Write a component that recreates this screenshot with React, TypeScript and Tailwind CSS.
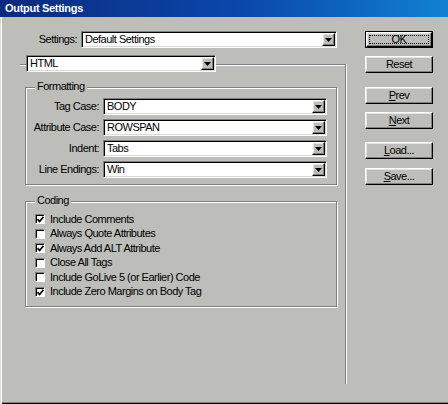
import React from "react";

const raised =
  "border border-t-white border-l-white border-b-black border-r-black shadow-[inset_-1px_-1px_0_#808080,inset_1px_1px_0_#e4e4e0]";

function Arrow() {
  return (
    <div className={`flex h-[13px] w-[13px] shrink-0 items-center justify-center bg-[#bdbeb9] ${raised}`}>
      <svg width="7" height="4" viewBox="0 0 7 4">
        <polygon points="0,0 7,0 3.5,4" fill="#000" />
      </svg>
    </div>
  );
}

function Select({ value, w }: { value: string; w: string }) {
  return (
    <div
      className={`flex h-[17px] shrink-0 items-center bg-white border border-t-[#808080] border-l-[#808080] border-b-white border-r-white shadow-[inset_1px_1px_0_#000,inset_-1px_-1px_0_#d8d8d4] ${w}`}
    >
      <span className="flex-1 truncate pl-[3px] leading-none">{value}</span>
      <div className="mr-[1px]">
        <Arrow />
      </div>
    </div>
  );
}

function Btn({ children, isDefault }: { children: React.ReactNode; isDefault?: boolean }) {
  if (isDefault) {
    return (
      <div className="h-[17px] w-[68px] border border-black">
        <div className={`flex h-full w-full items-center justify-center bg-[#bdbeb9] ${raised}`}>
          <div className="flex h-[9px] w-[60px] items-center justify-center border border-dotted border-black text-[11px] leading-none">
            {children}
          </div>
        </div>
      </div>
    );
  }
  return (
    <div className={`flex h-[17px] w-[68px] items-center justify-center bg-[#bdbeb9] text-[11px] leading-none ${raised}`}>
      {children}
    </div>
  );
}

function Check({ checked, label }: { checked: boolean; label: string }) {
  return (
    <div className="flex h-[14.5px] items-center">
      <div className="flex h-[10px] w-[10px] shrink-0 items-center justify-center bg-white border border-t-[#808080] border-l-[#808080] border-b-white border-r-white shadow-[inset_1px_1px_0_#000]">
        {checked && (
          <svg width="7" height="7" viewBox="0 0 7 7" className="ml-[1px] mt-[1px]">
            <path d="M0.5 3.2 L2.6 5.5 L6.5 0.8" stroke="#000" strokeWidth="1.8" fill="none" />
          </svg>
        )}
      </div>
      <span className="ml-[5px] leading-none">{label}</span>
    </div>
  );
}

const etched = "border border-[#808080] shadow-[inset_1px_1px_0_#fff,1px_1px_0_#fff]";

function FormRow({ label, value }: { label: string; value: string }) {
  return (
    <div className="flex h-[17px] items-center">
      <span className="w-[74px] pr-[1px] text-right leading-none">{label}</span>
      <div className="ml-[3px]">
        <Select value={value} w="w-[224px]" />
      </div>
    </div>
  );
}

export default function App() {
  return (
    <div className="flex h-[404px] w-[448px] flex-col overflow-hidden bg-[#bdbeb9] font-['Liberation_Sans',Arial,sans-serif] text-[11px] tracking-[-0.5px] text-black shadow-[inset_1px_0_0_#dcdcd8,inset_2px_0_0_#fff,inset_0_-1px_0_#000,inset_0_-2px_0_#808080]">
      {/* Title bar */}
      <div className="flex h-[17px] shrink-0 items-center bg-[linear-gradient(to_right,#0b2a7c,#0a48ac_55%,#1181d2)] pl-[5px]">
        <span className="text-[11px] font-bold leading-none tracking-[-0.3px] text-white">Output Settings</span>
      </div>

      <div className="flex flex-1">
        {/* Left column */}
        <div className="flex w-[346px] flex-col">
          {/* Settings row */}
          <div className="mt-[14px] flex h-[17px] items-center">
            <span className="w-[77px] text-right leading-none">Settings:</span>
            <div className="ml-[4px]">
              <Select value="Default Settings" w="w-[256px]" />
            </div>
          </div>

          {/* Tab group */}
          <div className="ml-[20px] mt-[16px] flex h-[320px] w-[326px] flex-col border-t border-r border-[#808080] shadow-[inset_0_1px_0_#fff,1px_0_0_#fff]">
            <div className="-mt-[10px] ml-[6px]">
              <Select value="HTML" w="w-[190px]" />
            </div>

            {/* Formatting */}
            <div className={`relative ml-[5px] mt-[15px] flex h-[98px] w-[312px] flex-col gap-[4px] pt-[10px] ${etched}`}>
              <span className="absolute left-[9px] top-[-7px] bg-[#bdbeb9] px-[2px] leading-none">Formatting</span>
              <FormRow label="Tag Case:" value="BODY" />
              <FormRow label="Attribute Case:" value="ROWSPAN" />
              <FormRow label="Indent:" value="Tabs" />
              <FormRow label="Line Endings:" value="Win" />
            </div>

            {/* Coding */}
            <div className={`relative ml-[5px] mt-[16px] flex h-[106px] w-[312px] flex-col pl-[9px] pt-[10px] ${etched}`}>
              <span className="absolute left-[9px] top-[-7px] bg-[#bdbeb9] px-[2px] leading-none">Coding</span>
              <Check checked label="Include Comments" />
              <Check checked={false} label="Always Quote Attributes" />
              <Check checked label="Always Add ALT Attribute" />
              <Check checked={false} label="Close All Tags" />
              <Check checked={false} label="Include GoLive 5 (or Earlier) Code" />
              <Check checked label="Include Zero Margins on Body Tag" />
            </div>
          </div>
        </div>

        {/* Right column buttons */}
        <div className="ml-[19px] flex flex-col pt-[14px]">
          <Btn isDefault>OK</Btn>
          <div className="mt-[8px]">
            <Btn>Reset</Btn>
          </div>
          <div className="mt-[14px]">
            <Btn>
              <span>
                <span className="underline">P</span>rev
              </span>
            </Btn>
          </div>
          <div className="mt-[8px]">
            <Btn>
              <span>
                <span className="underline">N</span>ext
              </span>
            </Btn>
          </div>
          <div className="mt-[13px]">
            <Btn>
              <span>
                <span className="underline">L</span>oad...
              </span>
            </Btn>
          </div>
          <div className="mt-[9px]">
            <Btn>
              <span>
                <span className="underline">S</span>ave...
              </span>
            </Btn>
          </div>
        </div>
      </div>
    </div>
  );
}
